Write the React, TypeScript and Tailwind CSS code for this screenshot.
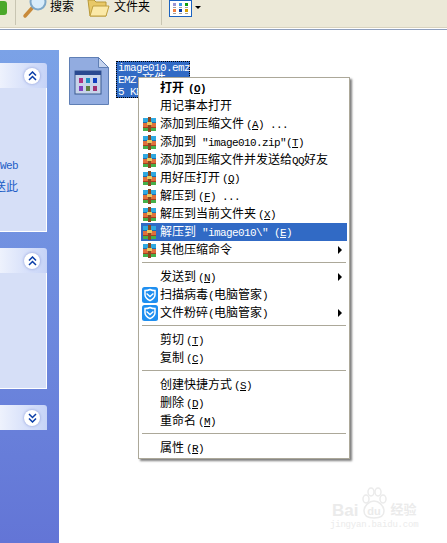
import React from "react";

const zh = { fontFamily: '"Liberation Mono", "Noto Sans CJK SC", monospace' };

// half-width latin, like the bitmap font in the screenshot
const L = ({ children }: { children: React.ReactNode }) => (
    <span className="text-[11px] tracking-[-0.6px] font-['Liberation_Mono',monospace]">{children}</span>
);

const Key = ({ k, tight }: { k: string; tight?: boolean }) => (
    <span className={tight ? "" : "ml-[2px]"}>
        <L>
            (<span className="underline">{k}</span>)
        </L>
    </span>
);

const RarIcon = () => (
    <svg width="15" height="15" viewBox="0 0 15 15" className="shrink-0">
        <rect x="1" y="1" width="13" height="4" fill="#2fa8e0" />
        <rect x="1" y="5" width="13" height="1" fill="#1a6fb0" />
        <rect x="1" y="6" width="13" height="4" fill="#e0703a" />
        <rect x="1" y="10" width="13" height="1" fill="#a83f20" />
        <rect x="1" y="11" width="13" height="3" fill="#45b04a" />
        <rect x="6" y="0" width="3" height="15" fill="#8a4a20" />
        <rect x="5" y="5" width="5" height="3" fill="#e8c860" />
    </svg>
);

const ShieldIcon = () => (
    <svg width="16" height="16" viewBox="0 0 16 16" className="shrink-0">
        <rect x="0" y="0" width="16" height="16" rx="2.5" fill="#1f8ff0" />
        <path d="M8 2.5c2 1 3.6 1.1 5 1.1v4.2c0 2.8-2.4 4.6-5 5.9-2.6-1.3-5-3.1-5-5.9V3.6c1.4 0 3-.1 5-1.1z" fill="none" stroke="#fff" strokeWidth="1.5" />
        <path d="M4.6 6.4 8 9.6l3.4-3.2" fill="none" stroke="#fff" strokeWidth="1.4" />
    </svg>
);

type Row = { label: React.ReactNode; icon?: "rar" | "shield"; arrow?: boolean; active?: boolean };

const Item = ({ label, icon, arrow, active }: Row) => (
    <div className={`flex h-[18px] items-center whitespace-pre pl-[1px] pr-[5px] text-xs ${active ? "bg-[#316ac5] text-white" : "text-black"}`}>
        <div className="flex w-[18px] shrink-0 items-center justify-start">
            {icon === "rar" && <RarIcon />}
            {icon === "shield" && <ShieldIcon />}
        </div>
        <span className="flex-1 pt-[2px]">{label}</span>
        {arrow && <span className="h-0 w-0 border-y-[4px] border-l-[4px] border-y-transparent border-l-black" />}
    </div>
);

const Sep = () => (
    <div className="h-[9px] px-[1px] pt-[3px]">
        <div className="h-px w-full bg-[#aca899]" />
    </div>
);

const Chevrons = ({ down }: { down?: boolean }) => (
    <div className="flex h-[16px] w-[16px] items-center justify-center rounded-full bg-white shadow-[0_0_3px_#8a9ad8]">
        <svg width="9" height="10" viewBox="0 0 9 10" className={down ? "rotate-180" : ""}>
            <path d="M1 4.5 4.5 1 8 4.5M1 9 4.5 5.5 8 9" fill="none" stroke="#0a3ea8" strokeWidth="1.5" />
        </svg>
    </div>
);

const PanelHeader = ({ down }: { down?: boolean }) => (
    <div className="flex h-[25px] items-center justify-end rounded-tr-[3px] bg-gradient-to-r from-[#eef2fd] to-[#c6d3f7] pr-[7px]">
        <Chevrons down={down} />
    </div>
);

const MagnifierIcon = () => (
    <svg width="26" height="24" viewBox="0 0 26 24">
        <line x1="3" y1="20" x2="11" y2="11" stroke="#c88a3a" strokeWidth="3.5" strokeLinecap="round" />
        <circle cx="16" cy="6" r="7.5" fill="#d8ecfa" stroke="#7fa8c8" strokeWidth="2" />
    </svg>
);

const FolderIcon = () => (
    <svg width="23" height="21" viewBox="0 0 23 21">
        <path d="M1 3h6l2 2h10v14H3z" fill="#e8c868" stroke="#b89838" />
        <path d="M6 9h16l-3 10H3z" fill="#fbe9a8" stroke="#c0a040" />
    </svg>
);

const ViewsIcon = () => (
    <svg width="23" height="18" viewBox="0 0 23 18">
        <rect x="0.5" y="0.5" width="22" height="17" fill="#fff" stroke="#1a62c0" />
        <rect x="0" y="0" width="23" height="2" fill="#1a62c0" />
        {["#9a94d4", "#3a98e8", "#10a010", "#f08040", "#0a3ea8", "#d8a000"].map((c, i) => (
            <g key={c}>
                <rect x={4 + (i % 3) * 6} y={i < 3 ? 4 : 10} width="3" height="3" fill={c} />
                <rect x={4 + (i % 3) * 6} y={i < 3 ? 8 : 14} width="3" height="1" fill="#a0a0a0" />
            </g>
        ))}
    </svg>
);

const DocIcon = () => (
    <svg width="40" height="48" viewBox="0 0 40 48">
        <path d="M.5.5h29l10 10v37H.5z" fill="#92ace0" stroke="#5f7fb5" />
        <path d="M29.5.5v10h10z" fill="#c6d4ee" stroke="#5f7fb5" />
        <rect x="6" y="14" width="26" height="23" fill="#c8d4ea" stroke="#3a5a90" />
        <rect x="6" y="14" width="26" height="4" fill="#2a4a90" />
        {["#b03080", "#2090c0", "#1040c0", "#8040c0", "#608040", "#a03070"].map((c, i) => (
            <rect key={i} x={10 + (i % 3) * 7} y={i < 3 ? 21 : 29} width="4" height="5" fill={c} />
        ))}
    </svg>
);

const PawMark = () => (
    <svg width="30" height="34" viewBox="0 0 30 34" fill="none" stroke="#ebebeb" strokeWidth="1.5">
        <ellipse cx="8" cy="13" rx="3" ry="4" />
        <ellipse cx="13" cy="6" rx="3" ry="4" />
        <ellipse cx="20" cy="6" rx="3" ry="4" />
        <ellipse cx="25" cy="13" rx="3" ry="4" />
        <path d="M16 15c-5 0-10 5-10 10 0 5 4 7 10 7s10-2 10-7c0-5-5-10-10-10z" />
        <text x="16" y="29" textAnchor="middle" fontSize="11" fontWeight="700" fill="#ebebeb" stroke="none" fontFamily="Liberation Sans">du</text>
    </svg>
);

export default function App() {
    return (
        <div style={zh} className="relative flex h-[543px] w-[447px] flex-col overflow-hidden bg-white">
            {/* toolbar, its icons are cut off by the top edge */}
            <div className="flex h-[27px] items-center overflow-hidden bg-[#ece9d8] pb-[12px] text-xs text-black">
                <div className="h-[14px] w-[7px] rounded-r-[3px] bg-[#4aa82a]" />
                <div className="ml-[8px] h-[25px] w-px self-start bg-[#c8c5b2]" />
                <div className="ml-[6px] flex items-center"><MagnifierIcon /></div>
                <span className="ml-[2px]">搜索</span>
                <div className="ml-[13px] flex items-center"><FolderIcon /></div>
                <span className="ml-[4px]">文件夹</span>
                <div className="ml-[11px] h-[25px] w-px self-start bg-[#c8c5b2]" />
                <div className="ml-[7px] flex items-center"><ViewsIcon /></div>
                <span className="ml-[3px] h-0 w-0 border-x-[3px] border-t-[3px] border-x-transparent border-t-black" />
            </div>
            <div className="h-px bg-[#d8d2bd]" />
            <div className="h-[2px] border-b border-[#8e9fbd]" />
            <div className="h-[20px]" />

            {/* explorer */}
            <div className="flex flex-1">
                <div className="flex w-[59px] flex-col bg-gradient-to-b from-[#7ba2e7] to-[#6375d6] pr-[12px] pt-[13px]">
                    <PanelHeader />
                    <div className="h-[144px] border-b border-r border-white bg-[#d6dff7] pt-[71px] text-xs text-[#215dc6]">
                        <div className="flex w-[18px] flex-col items-end">
                            <L>Web</L>
                            <span className="mt-[6px] whitespace-pre">送此</span>
                        </div>
                    </div>
                    <div className="mt-[16px]"><PanelHeader /></div>
                    <div className="h-[116px] border-b border-r border-white bg-[#d6dff7]" />
                    <div className="mt-[16px]"><PanelHeader down /></div>
                </div>
                <div className="flex flex-1 items-start pl-[10px] pt-[7px]">
                    <DocIcon />
                    <div className="ml-[7px] mt-[4px] h-[37px] w-[74px] whitespace-pre border border-dotted border-black bg-[#316ac5] px-[1px] text-xs leading-[12px] text-white">
                        <div><L>image010.emz</L></div>
                        <div><L>EMZ </L>文件</div>
                        <div><L>5 KB</L></div>
                    </div>
                </div>
            </div>

            {/* context menu */}
            <div className="absolute left-[138px] top-[77px] w-[212px] border border-[#aca899] bg-white px-[2px] py-[1px] shadow-[2px_2px_2px_rgba(0,0,0,0.5)]">
                <Item label={<b>打开<span className="ml-[2px]"><Key k="O" /></span></b>} />
                <Item label="用记事本打开" />
                <Item icon="rar" label={<>添加到压缩文件<Key k="A" /><L> ...</L></>} />
                <Item icon="rar" label={<>添加到<L> "image010.zip"</L><Key tight k="T" /></>} />
                <Item icon="rar" label={<>添加到压缩文件并发送给<L>QQ</L>好友</>} />
                <Item icon="rar" label={<>用好压打开<Key k="Q" /></>} />
                <Item icon="rar" label={<>解压到<Key k="F" /><L> ...</L></>} />
                <Item icon="rar" label={<>解压到当前文件夹<Key k="X" /></>} />
                <Item active icon="rar" label={<>解压到<L> "image010\" </L><Key tight k="E" /></>} />
                <Item arrow icon="rar" label="其他压缩命令" />
                <Sep />
                <Item arrow label={<>发送到<Key k="N" /></>} />
                <Item icon="shield" label={<>扫描病毒<L>(</L>电脑管家<L>)</L></>} />
                <Item arrow icon="shield" label={<>文件粉碎<L>(</L>电脑管家<L>)</L></>} />
                <Sep />
                <Item label={<>剪切<Key k="T" /></>} />
                <Item label={<>复制<Key k="C" /></>} />
                <Sep />
                <Item label={<>创建快捷方式<Key k="S" /></>} />
                <Item label={<>删除<Key k="D" /></>} />
                <Item label={<>重命名<Key k="M" /></>} />
                <Sep />
                <Item label={<>属性<Key k="R" /></>} />
            </div>

            {/* watermark */}
            <div className="absolute left-[330px] top-[486px] flex flex-col items-center">
                <div className="flex items-end text-[17px] font-bold leading-[18px] text-[#ebebeb]">
                    <span className="font-['Liberation_Sans',sans-serif]">Bai</span>
                    <PawMark />
                    <span className="ml-[2px] text-[13px]">经验</span>
                </div>
                <span className="text-[9px] leading-[11px] tracking-[-0.2px] text-[#ebebeb]">jingyan.baidu.com</span>
            </div>
        </div>
    );
}
